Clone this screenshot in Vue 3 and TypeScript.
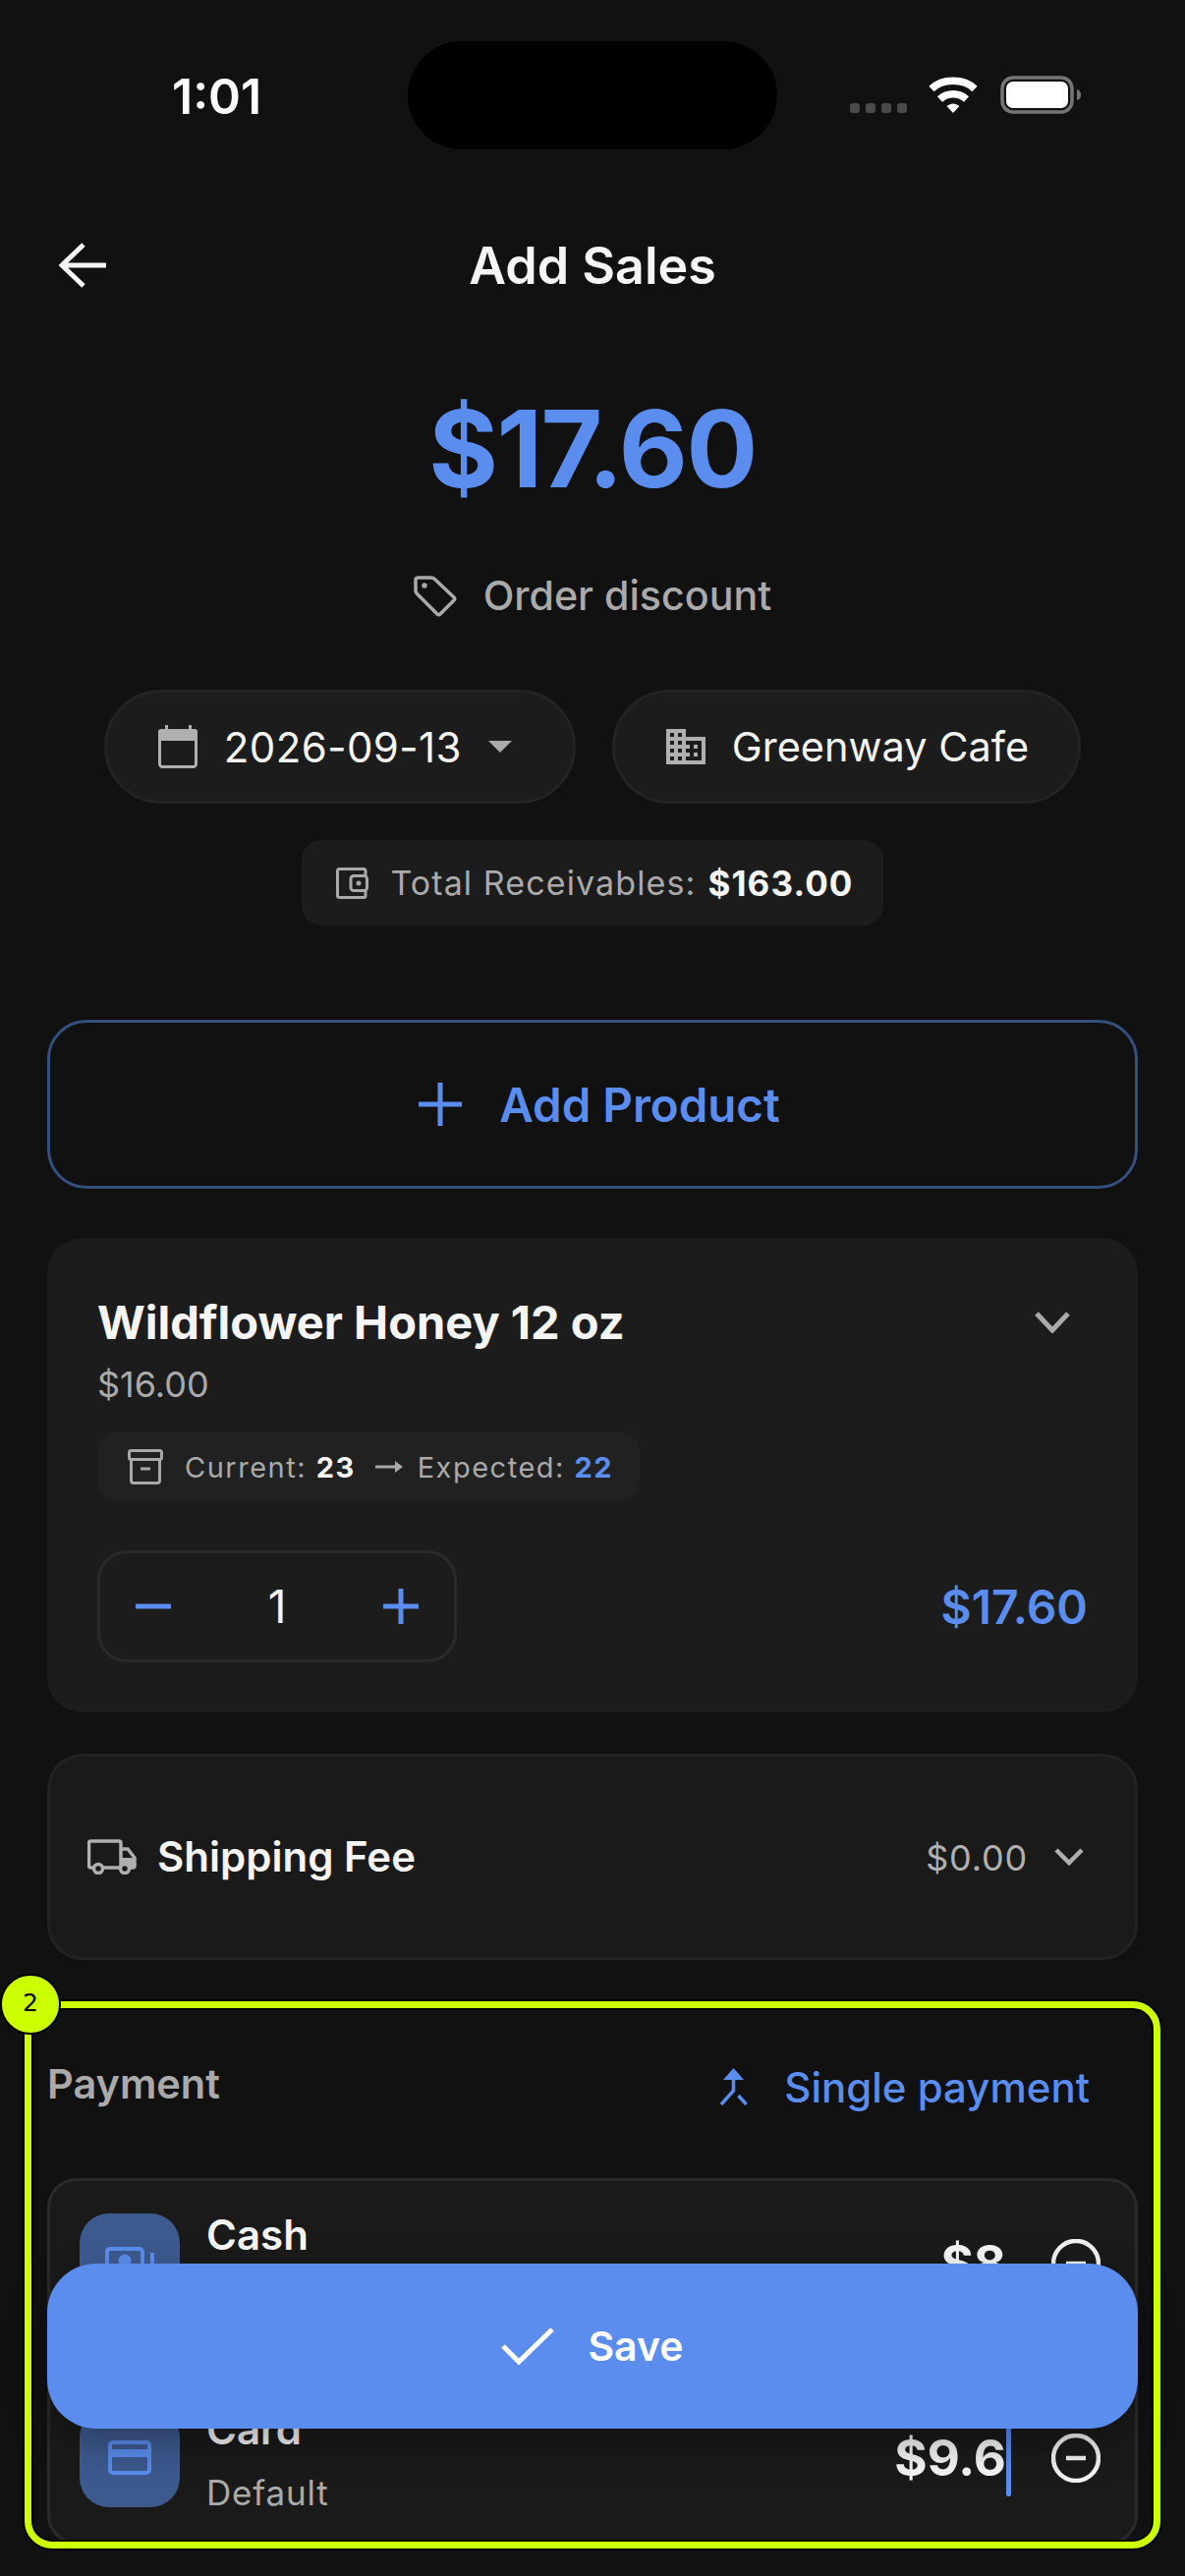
<template>
  <div class="phone">
    <div class="status-bar">
      <span class="time">1:01</span>
      <div class="island"></div>
      <svg class="status-icons" width="236" height="40" viewBox="0 0 236 40">
        <rect x="0" y="28" width="10" height="10" rx="3" fill="#4a4a4a" />
        <rect x="16" y="28" width="10" height="10" rx="3" fill="#4a4a4a" />
        <rect x="32" y="28" width="10" height="10" rx="3" fill="#4a4a4a" />
        <rect x="48" y="28" width="10" height="10" rx="3" fill="#4a4a4a" />
        <path d="M83 13.500C94 2.500 116 2.500 127 13.500" fill="none" stroke="#fff" stroke-width="7.500" />
        <path d="M91.500 24C99 17 111 17 118.500 24" fill="none" stroke="#fff" stroke-width="7.500" />
        <path d="M98.500 31C103 27.500 107 27.500 111.500 31L105 38z" fill="#fff" />
        <rect x="155" y="2" width="71" height="35" rx="11" fill="none" stroke="#757575" stroke-width="3.500" />
        <rect x="159" y="6" width="63" height="27" rx="7" fill="#fff" />
        <path d="M231 14q4 1 4 5.500t-4 5.500z" fill="#757575" />
      </svg>
    </div>

    <header class="top-nav">
      <svg width="48" height="46" viewBox="0 0 48 46" fill="none" stroke="#f5f5f5" stroke-width="5">
        <path d="M2 23H48M25 2 3 23 25 44" />
      </svg>
      <h1>Add Sales</h1>
      <span></span>
    </header>

    <div class="amount">$17.60</div>

    <div class="discount">
      <svg width="44" height="43" viewBox="0 0 44 43" fill="none" stroke="#aaa" stroke-width="3.500">
        <path d="M5 3h13q2 0 3.500 1.500L41 23q1.500 1.500 0 3L27 40q-1.500 1.500-3 0L4 20q-2-2-2-3.500V5q0-2 3-2z" />
        <circle cx="11" cy="11" r="2" fill="#aaa" stroke-width="1.500" />
      </svg>
      <span>Order discount</span>
    </div>

    <div class="filters">
      <div class="pill date-pill">
        <svg width="40" height="44" viewBox="0 0 40 44" fill="#b0b0b0">
          <rect x="7" y="0" width="3" height="6" />
          <rect x="31" y="0" width="3" height="6" />
          <rect x="1.500" y="5.500" width="37" height="37" rx="3" fill="none" stroke="#b0b0b0" stroke-width="3" />
          <path d="M3 4h34q3 0 3 3v9H0V7q0-3 3-3z" />
        </svg>
        <span>2026-09-13</span>
        <i class="caret-down"></i>
      </div>
      <div class="pill store-pill">
        <svg width="40" height="36" viewBox="2 3 20 18" fill="#b0b0b0">
          <path d="M12 7V3H2v18h20V7H12zM6 19H4v-2h2v2zm0-4H4v-2h2v2zm0-4H4V9h2v2zm0-4H4V5h2v2zm4 12H8v-2h2v2zm0-4H8v-2h2v2zm0-4H8V9h2v2zm0-4H8V5h2v2zm10 12h-8v-2h2v-2h-2v-2h2v-2h-2V9h8v10zm-2-8h-2v2h2v-2zm0 4h-2v2h2v-2z" />
        </svg>
        <span>Greenway Cafe</span>
      </div>
    </div>

    <div class="receivables">
      <svg width="33" height="32" viewBox="0 0 33 32" fill="none" stroke="#aaa" stroke-width="3">
        <path d="M30 8V3.500q0-2-2-2H3.500q-2 0-2 2v25q0 2 2 2H28q2 0 2-2V24" />
        <rect x="15" y="8.500" width="16.500" height="15" rx="3" />
        <circle cx="23" cy="16" r="2.500" fill="#aaa" stroke="none" />
      </svg>
      <span class="recv-label">Total Receivables:</span>
      <b>$163.00</b>
    </div>

    <button class="add-product">
      <svg width="44" height="44" viewBox="0 0 44 44" fill="none" stroke="#5a8dee" stroke-width="5">
        <path d="M0 22H44M22 0V44" />
      </svg>
      <span>Add Product</span>
    </button>

    <section class="product-card">
      <div class="product-head">
        <h2>Wildflower Honey 12 oz</h2>
        <svg width="36" height="22" viewBox="0 0 36 22" fill="none" stroke="#aaa" stroke-width="5">
          <path d="M2 2 18 19 34 2" />
        </svg>
      </div>
      <div class="unit-price">$16.00</div>
      <div class="stock-chip">
        <svg width="36" height="36" viewBox="0 0 36 36" fill="none" stroke="#a8a8a8" stroke-width="3">
          <rect x="1.500" y="1.500" width="33" height="9" rx="2" />
          <path d="M3.500 10.500V32q0 2.500 2.500 2.500h24q2.500 0 2.500-2.500V10.500M13 20h10" />
        </svg>
        <span class="stock-text">Current: <b>23</b></span>
        <svg width="28" height="12" viewBox="0 0 28 12" fill="#a8a8a8">
          <path d="M0 4.500h20V0l8 6-8 6V7.500H0z" />
        </svg>
        <span class="stock-text">Expected: <b class="blue">22</b></span>
      </div>
      <div class="product-foot">
        <div class="stepper">
          <svg width="36" height="36" viewBox="0 0 36 36" fill="none" stroke="#5a8dee" stroke-width="5">
            <path d="M0 18H36" />
          </svg>
          <span>{{ quantity }}</span>
          <svg width="36" height="36" viewBox="0 0 36 36" fill="none" stroke="#5a8dee" stroke-width="5">
            <path d="M0 18H36M18 0V36" />
          </svg>
        </div>
        <div class="line-total">$17.60</div>
      </div>
    </section>

    <section class="shipping-card">
      <svg width="50" height="36" viewBox="0 0 50 36" fill="none" stroke="#b0b0b0" stroke-width="3.500">
        <path d="M6 29H3.500q-2 0-2-2V4q0-2 2-2H32q2 0 2 2v25H16M34 10h7l7 9v8q0 2-2 2h-3" />
        <path d="M34 19h14v10H34z" fill="#b0b0b0" stroke="none" />
        <circle cx="11" cy="30" r="4.500" />
        <circle cx="38" cy="30" r="4.500" fill="#1a1a1a" />
      </svg>
      <span class="shipping-title">Shipping Fee</span>
      <span class="shipping-value">$0.00</span>
      <svg width="30" height="18" viewBox="0 0 30 18" fill="none" stroke="#b0b0b0" stroke-width="4.500">
        <path d="M2 2 15 15 28 2" />
      </svg>
    </section>

    <div class="payment-head">
      <span class="payment-title">Payment</span>
      <div class="payment-mode">
        <svg width="29" height="38" viewBox="0 0 29 38" fill="none" stroke="#5a8dee" stroke-width="3.500">
          <path d="M14.500 0 25 12H4z" fill="#5a8dee" stroke="none" />
          <path d="M14.500 10V23L2 37M19.500 28 27.500 37" />
        </svg>
        <span>Single payment</span>
      </div>
    </div>

    <section class="payment-card">
      <div v-for="row in payments" :key="row.name" class="pay-row">
        <div class="pay-tile">
          <svg v-if="row.icon === 'cash'" width="50" height="34" viewBox="0 0 50 34" fill="#5a8dee">
            <rect x="2" y="2" width="36" height="26" rx="3" fill="none" stroke="#5a8dee" stroke-width="4" />
            <circle cx="20" cy="14" r="6.500" />
            <rect x="46" y="6" width="4" height="26" />
          </svg>
          <svg v-else width="44" height="35" viewBox="0 0 44 35" fill="#5a8dee">
            <rect x="2" y="2" width="40" height="31" rx="3" fill="none" stroke="#5a8dee" stroke-width="4" />
            <rect x="2" y="9" width="40" height="8" />
          </svg>
        </div>
        <div class="pay-text">
          <div class="pay-name">{{ row.name }}</div>
          <div v-if="row.note" class="pay-note">{{ row.note }}</div>
        </div>
        <div class="pay-amount">{{ row.amount }}</div>
        <i class="text-caret" :class="{ off: !row.focused }"></i>
        <svg class="pay-remove" width="50" height="50" viewBox="0 0 50 50" fill="none" stroke="#f2f2f2" stroke-width="4.500">
          <circle cx="25" cy="25" r="23" />
          <path d="M15 25H35" stroke-width="4.500" />
        </svg>
      </div>
    </section>

    <button class="save-btn">
      <svg width="54" height="40" viewBox="0 0 54 40" fill="none" stroke="#fff" stroke-width="5">
        <path d="M2 20 18 36 52 3" />
      </svg>
      <span>Save</span>
    </button>

    <div class="annot-box"></div>
    <div class="annot-badge">2</div>
  </div>
</template>

<script setup lang="ts">
import { ref } from 'vue'

interface PaymentRow {
  name: string
  note?: string
  amount: string
  icon: 'cash' | 'card'
  focused: boolean
}

const quantity = ref<number>(1)

const payments: PaymentRow[] = [
  { name: 'Cash', amount: '$8', icon: 'cash', focused: false },
  { name: 'Card', note: 'Default', amount: '$9.6', icon: 'card', focused: true }
]
</script>

<style>
html,
body {
  margin: 0;
  background: #111;
}
</style>

<style scoped>
.phone {
  position: relative;
  width: 1206px;
  height: 2622px;
  overflow: hidden;
  background: #111;
  color: #f5f5f5;
  font-family: Inter, "Liberation Sans", sans-serif;
}

svg {
  display: block;
  flex: none;
}

.status-bar {
  display: grid;
  grid-template-columns: 415px 376px 1fr;
  align-items: center;
  padding-top: 42px;
}

.time {
  margin-top: 2px;
  padding-left: 175px;
  font-size: 50px;
  font-weight: 600;
  line-height: 56px;
  color: #fff;
}

.island {
  height: 110px;
  border-radius: 55px;
  background: #000;
}

.status-icons {
  margin-left: 74px;
}

.top-nav {
  display: grid;
  grid-template-columns: 1fr auto 1fr;
  align-items: center;
  height: 100px;
  margin-top: 68px;
  padding: 0 60px;
}

.top-nav h1 {
  margin: 2px 0 0;
  font-size: 52px;
  font-weight: 600;
  line-height: 60px;
}

.amount {
  margin-top: 77px;
  font-size: 108px;
  font-weight: 700;
  line-height: 120px;
  letter-spacing: -1.500px;
  text-align: center;
  color: #5a8dee;
}

.discount {
  display: flex;
  align-items: center;
  justify-content: center;
  gap: 27px;
  height: 50px;
  margin-top: 64px;
  font-size: 41.200px;
  font-weight: 500;
  color: #aaa;
}

.filters {
  display: flex;
  justify-content: center;
  gap: 37px;
  margin-top: 71px;
}

.pill {
  display: flex;
  align-items: center;
  gap: 27px;
  box-sizing: border-box;
  height: 116px;
  padding: 0 50px 0 52px;
  border: 3px solid #232323;
  border-radius: 58px;
  background: #1c1c1c;
  font-size: 42px;
}

.date-pill {
  padding-right: 62px;
  letter-spacing: 0.400px;
}

.store-pill {
  font-size: 41.500px;
}

.caret-down {
  width: 0;
  height: 0;
  border-left: 12px solid transparent;
  border-right: 12px solid transparent;
  border-top: 12px solid #aaa;
}

.receivables {
  display: flex;
  align-items: center;
  width: max-content;
  height: 87px;
  margin: 37px auto 0;
  padding: 0 30px 0 35px;
  border-radius: 20px;
  background: #1c1c1c;
  font-size: 34px;
  letter-spacing: 1.100px;
  color: #aaa;
}

.recv-label {
  margin: 0 12px 0 22px;
}

.receivables b {
  font-size: 35px;
  font-weight: 700;
  color: #f5f5f5;
}

.add-product {
  display: flex;
  align-items: center;
  justify-content: center;
  gap: 38px;
  box-sizing: border-box;
  width: 1110px;
  height: 172px;
  margin: 96px 48px 0;
  padding-left: 20px;
  border: 3px solid #34507f;
  border-radius: 40px;
  background: transparent;
  font-family: inherit;
  font-size: 47.500px;
  font-weight: 600;
  color: #5a8dee;
}

.product-card {
  box-sizing: border-box;
  width: 1110px;
  height: 483px;
  margin: 50px 48px 0;
  padding: 55px 51px 0;
  border-radius: 36px;
  background: #1c1c1c;
}

.product-head {
  display: flex;
  align-items: center;
  justify-content: space-between;
  height: 60px;
  padding-right: 18px;
}

.product-head svg {
  margin-top: 2px;
}

.product-head h2 {
  margin: 0;
  font-size: 47px;
  font-weight: 700;
}

.unit-price {
  margin-top: 12px;
  font-size: 36px;
  line-height: 44px;
  color: #aaa;
}

.stock-chip {
  display: flex;
  align-items: center;
  width: max-content;
  height: 70px;
  margin-top: 27px;
  padding: 0 27px 0 31px;
  border-radius: 20px;
  background: #212121;
  font-size: 29px;
  letter-spacing: 1.500px;
  color: #aaa;
}

.stock-chip > svg:first-child {
  margin-right: 22px;
}

.stock-chip > svg:nth-of-type(2) {
  margin: 0 15px 0 20px;
}

.stock-text b {
  font-weight: 700;
  color: #f5f5f5;
}

.stock-text b.blue {
  color: #5a8dee;
}

.product-foot {
  display: flex;
  align-items: center;
  justify-content: space-between;
  margin-top: 50px;
}

.stepper {
  display: flex;
  align-items: center;
  justify-content: space-between;
  box-sizing: border-box;
  width: 366px;
  height: 114px;
  padding: 0 36px;
  border: 3px solid #2a2a2a;
  border-radius: 30px;
  font-size: 46px;
}

.line-total {
  font-size: 48px;
  font-weight: 600;
  color: #5a8dee;
}

.shipping-card {
  display: flex;
  align-items: center;
  box-sizing: border-box;
  width: 1110px;
  height: 210px;
  margin: 42px 48px 0;
  padding: 0 52px 0 38px;
  border: 3px solid #222;
  border-radius: 36px;
  background: #1a1a1a;
}

.shipping-title {
  margin: 0 0 2px 21px;
  font-size: 42px;
  font-weight: 600;
}

.shipping-value {
  margin: 2px 0 0 auto;
  font-size: 36px;
  letter-spacing: 0.800px;
  color: #b0b0b0;
}

.shipping-card > svg:last-child {
  margin-left: 27px;
}

.payment-head {
  display: flex;
  align-items: center;
  justify-content: space-between;
  height: 60px;
  margin: 100px 97px 0 48px;
}

.payment-title {
  margin-bottom: 8px;
  font-size: 41.500px;
  font-weight: 600;
  color: #aaa;
}

.payment-mode {
  display: flex;
  align-items: center;
  gap: 37px;
  margin-bottom: 2px;
  font-size: 42px;
  font-weight: 500;
  color: #5a8dee;
}

.payment-card {
  box-sizing: border-box;
  width: 1110px;
  height: 373px;
  margin: 62px 48px 0;
  padding: 33px 35px 0 30px;
  border: 3px solid #2a2a2a;
  border-radius: 30px;
  background: #1a1a1a;
}

.pay-row {
  display: flex;
  align-items: center;
  height: 101px;
  margin-bottom: 97px;
}

.pay-tile {
  display: flex;
  align-items: center;
  justify-content: center;
  width: 102px;
  height: 101px;
  border-radius: 30px;
  background: #3d5a8f;
}

.pay-text {
  align-self: flex-start;
  margin-left: 27px;
}

.pay-name {
  font-size: 42px;
  font-weight: 600;
  line-height: 44px;
}

.pay-note {
  margin-top: 20px;
  font-size: 35px;
  line-height: 44px;
  letter-spacing: 0.800px;
  color: #aaa;
}

.pay-amount {
  margin-left: auto;
  font-size: 51px;
  font-weight: 700;
}

.text-caret {
  width: 5px;
  height: 78px;
  margin: 0 41px 0 0;
  border-radius: 2px;
  background: #5a8dee;
}

.text-caret.off {
  visibility: hidden;
}

.save-btn {
  position: absolute;
  left: 48px;
  right: 48px;
  bottom: 150px;
  display: flex;
  align-items: center;
  justify-content: center;
  gap: 34px;
  height: 168px;
  border: none;
  border-radius: 50px;
  background: #5a8dee;
  box-shadow: 0 16px 40px rgba(0, 0, 0, 0.3);
  font-family: inherit;
  font-size: 41px;
  font-weight: 600;
  color: #fff;
}

.annot-box {
  position: absolute;
  left: 25px;
  top: 2037px;
  box-sizing: border-box;
  width: 1156px;
  height: 557px;
  border: 7px solid #ccff00;
  border-radius: 28px;
  box-shadow: 0 0 0 2px #000, inset 0 0 0 2px #000;
}

.annot-badge {
  position: absolute;
  left: 0;
  top: 2009px;
  box-sizing: border-box;
  width: 62px;
  height: 62px;
  border: 2px solid #000;
  border-radius: 50%;
  background: #ccff00;
  font-family: "DejaVu Sans", sans-serif;
  font-size: 25px;
  line-height: 56px;
  text-align: center;
  color: #000;
}
</style>
